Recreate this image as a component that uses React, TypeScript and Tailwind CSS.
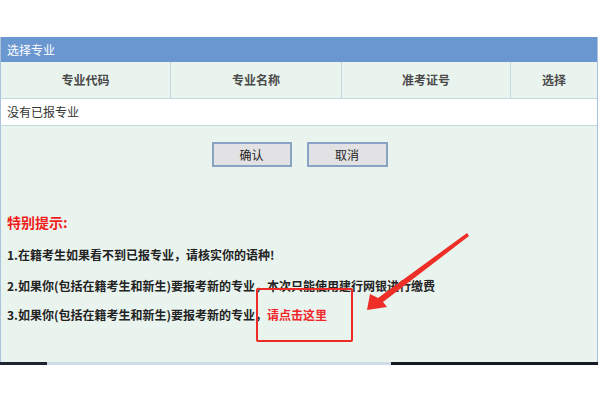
import React from "react";

export default function App() {
  const font = { fontFamily: '"Noto Sans CJK SC", "Noto Sans", sans-serif' };
  return (
    <div className="relative w-[600px] h-[400px] bg-white overflow-hidden" style={font}>
      <div className="h-[37px]" />
      <div className="w-[598px] h-[325px] bg-[#eaf4ef] border-l border-r border-[#a9c3dc] flex flex-col">
        <div className="h-[25px] bg-[#6b97d1] flex items-center pl-[6px] text-[12px] text-white">选择专业</div>
        <div className="grid grid-cols-[170px_171px_169px_1fr] h-[37px] border-b border-[#c4d8e0] text-[12px] font-bold text-[#4a4a4a]">
          <div className="flex items-center justify-center border-r border-[#c4d8e0]">专业代码</div>
          <div className="flex items-center justify-center border-r border-[#c4d8e0]">专业名称</div>
          <div className="flex items-center justify-center border-r border-[#c4d8e0]">准考证号</div>
          <div className="flex items-center justify-center">选择</div>
        </div>
        <div className="h-[27px] bg-white border-b border-[#c4d8e0] flex items-center pl-[6px] text-[12px] text-[#333]">没有已报专业</div>
        <div className="flex justify-center gap-[15px] mt-[16px] pl-[1px]">
          <div className="w-[80px] h-[25px] bg-[#e2e2e4] border-2 border-[#8aa3c4] flex items-center justify-center text-[12px] text-[#222]">确认</div>
          <div className="w-[81px] h-[25px] bg-[#e2e2e4] border-2 border-[#8aa3c4] flex items-center justify-center text-[12px] text-[#222]">取消</div>
        </div>
        <div className="mt-[45px] pl-[6px] text-[14px] font-bold text-[#f01c1c] leading-[20px]">特别提示:</div>
        <div className="pl-[6px] text-[12px] font-bold text-[#222] flex flex-col">
          <div className="h-[18px] mt-[14px] leading-[18px]">1.在籍考生如果看不到已报专业，请核实你的语种!</div>
          <div className="h-[18px] mt-[13px] leading-[18px]">2.如果你(包括在籍考生和新生)要报考新的专业，本次只能使用建行网银进行缴费</div>
          <div className="h-[18px] mt-[11px] leading-[18px]">
            3.如果你(包括在籍考生和新生)要报考新的专业，<span className="text-[#f0262a]">请点击这里</span>
          </div>
        </div>
      </div>
      <div className="flex h-[3px]">
        <div className="w-[47px] bg-[#1f2430]" />
        <div className="w-[344px] bg-[#cfdce8]" />
        <div className="w-[207px] bg-[#151a24]" />
      </div>
      <div className="absolute left-[256px] top-[288px] w-[97px] h-[54px] border-2 border-[#ee2a24] rounded-[2px]" />
      <svg className="absolute left-0 top-0" width="600" height="400" viewBox="0 0 600 400">
        <polygon points="467,233 469,236 383,302 387,307 367,310 370,294 378,298" fill="#ee2f27" />
      </svg>
    </div>
  );
}
